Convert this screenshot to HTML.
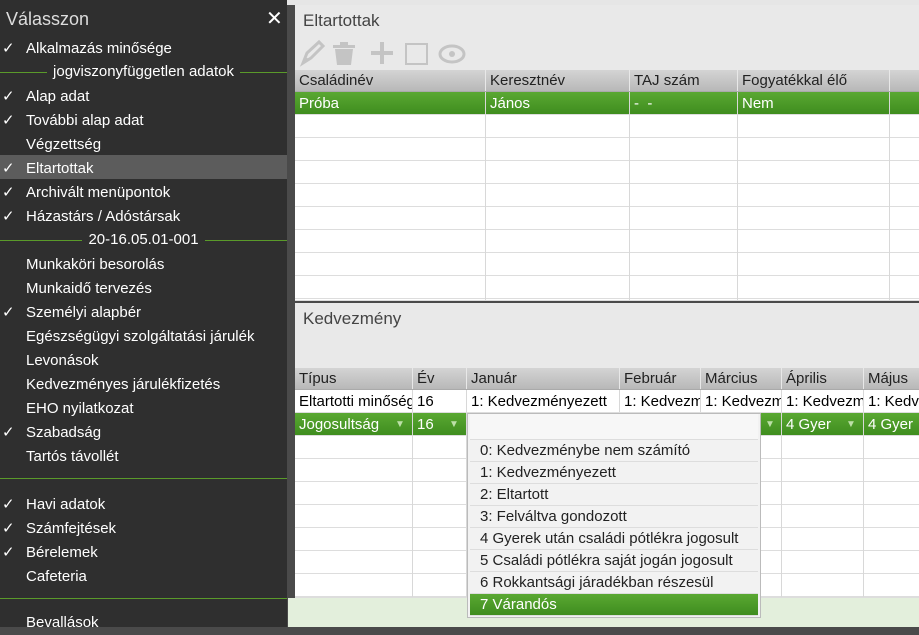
<!DOCTYPE html><html><head><meta charset="utf-8"><style>
*{margin:0;padding:0;box-sizing:border-box}
body{width:919px;height:627px;overflow:hidden;background:#4a4a4a;font-family:"Liberation Sans",sans-serif;position:relative}
.a{position:absolute;white-space:nowrap}
#sb{left:0;top:0;width:287px;height:627px;background:#2f2f2f;color:#fff;font-size:15px}
.it{position:absolute;left:0;width:287px;height:24px;line-height:24px}
.it .c{position:absolute;left:2px}
.it .t{position:absolute;left:26px}
.sep{position:absolute;left:0;width:287px;height:24px;line-height:24px;text-align:center}
.sep:before{content:"";position:absolute;left:0;right:0;top:12px;border-top:1px solid #5a9a2a}
.sep span{position:relative;background:#2f2f2f;padding:0 6px}
.hl{position:absolute;left:0;width:287px;border-top:1px solid #5a9a2a}
.pan{background:#e9e9e9}
.cell{position:absolute;height:100%;border-right:1px solid #d8d8d8;padding-left:4px;overflow:hidden;white-space:nowrap}
.row{position:absolute;left:0;right:0;height:23px;line-height:23px;font-size:15px;border-bottom:1px solid #ddd;background:#fff}
.row.th{background:linear-gradient(#d4d4d4,#b8b8b8);color:#222;border-bottom:1px solid #aaa}
.row.th .cell{border-right:1px solid #e8e8e8}
.row.g{background:linear-gradient(#5aa832,#3f8d1f);color:#fff}
.dd{position:absolute;left:467px;top:413px;width:294px;height:205px;background:#f2f2f2;border:1px solid #bbb;font-size:15px;color:#222}
.dd div{height:22px;line-height:22px;padding-left:10px;border-bottom:1px solid #ddd;margin:0 2px}
</style></head><body>
<div class="a" style="left:0;top:0;width:919px;height:5px;background:#e6e6e6"></div>
<div id="sb" class="a">
<div class="a" style="left:6px;top:9px;font-size:18px;color:#ddd">Válasszon</div>
<div class="a" style="left:266px;top:6px;font-size:20px">✕</div>
<div class="it" style="top:37px"><span class="c">✓</span><span class="t">Alkalmazás minősége</span></div>
<div class="sep" style="top:60px"><span>jogviszonyfüggetlen adatok</span></div>
<div class="it" style="top:85px"><span class="c">✓</span><span class="t">Alap adat</span></div>
<div class="it" style="top:109px"><span class="c">✓</span><span class="t">További alap adat</span></div>
<div class="it" style="top:133px"><span class="t">Végzettség</span></div>
<div class="it" style="top:155px;background:#5c5c5c"><span class="c" style="top:2px">✓</span><span class="t" style="top:2px">Eltartottak</span></div>
<div class="it" style="top:181px"><span class="c">✓</span><span class="t">Archivált menüpontok</span></div>
<div class="it" style="top:205px"><span class="c">✓</span><span class="t">Házastárs / Adóstársak</span></div>
<div class="sep" style="top:228px"><span>20-16.05.01-001</span></div>
<div class="it" style="top:253px"><span class="t">Munkaköri besorolás</span></div>
<div class="it" style="top:277px"><span class="t">Munkaidő tervezés</span></div>
<div class="it" style="top:301px"><span class="c">✓</span><span class="t">Személyi alapbér</span></div>
<div class="it" style="top:325px"><span class="t">Egészségügyi szolgáltatási járulék</span></div>
<div class="it" style="top:349px"><span class="t">Levonások</span></div>
<div class="it" style="top:373px"><span class="t">Kedvezményes járulékfizetés</span></div>
<div class="it" style="top:397px"><span class="t">EHO nyilatkozat</span></div>
<div class="it" style="top:421px"><span class="c">✓</span><span class="t">Szabadság</span></div>
<div class="it" style="top:445px"><span class="t">Tartós távollét</span></div>
<div class="hl" style="top:478px"></div>
<div class="it" style="top:493px"><span class="c">✓</span><span class="t">Havi adatok</span></div>
<div class="it" style="top:517px"><span class="c">✓</span><span class="t">Számfejtések</span></div>
<div class="it" style="top:541px"><span class="c">✓</span><span class="t">Bérelemek</span></div>
<div class="it" style="top:565px"><span class="t">Cafeteria</span></div>
<div class="hl" style="top:598px"></div>
<div class="it" style="top:611px"><span class="t">Bevallások</span></div>
</div>
<div class="a pan" style="left:295px;top:5px;width:624px;height:296px">
<div class="a" style="left:8px;top:6px;font-size:17px;color:#444">Eltartottak</div>
<svg class="a" style="left:4px;top:34px" width="170" height="28" fill="#c4c4c4">
<path d="M4 24 L8 14 L20 3 L24 7 L12 19 Z M6 22 L9 20" stroke="#c4c4c4" fill="none" stroke-width="3"/>
<rect x="34" y="6" width="22" height="3"/><rect x="41" y="3" width="8" height="3"/><path d="M36 10h18l-2 16h-14z"/>
<rect x="72" y="12" width="22" height="4"/><rect x="81" y="3" width="4" height="22"/>
<rect x="107" y="5" width="21" height="20" fill="none" stroke="#c4c4c4" stroke-width="2"/>
<ellipse cx="153" cy="15" rx="12" ry="8" fill="none" stroke="#c4c4c4" stroke-width="3"/><circle cx="153" cy="15" r="3"/>
</svg>
<div class="a" style="left:0;top:65px;width:624px;height:231px;background:#fff">
<div class="row th" style="top:0;height:22px;line-height:22px"><div class="cell" style="left:0;width:191px">Családinév</div><div class="cell" style="left:191px;width:144px">Keresztnév</div><div class="cell" style="left:335px;width:108px">TAJ szám</div><div class="cell" style="left:443px;width:152px">Fogyatékkal élő</div></div>
<div class="row g" style="top:22px"><div class="cell" style="left:0;width:191px">Próba</div><div class="cell" style="left:191px;width:144px">János</div><div class="cell" style="left:335px;width:108px">-&nbsp;&nbsp;-</div><div class="cell" style="left:443px;width:152px">Nem</div></div>
<div class="row" style="top:45px;height:186px;background:repeating-linear-gradient(#fff 0 22px,#ddd 22px 23px)"><div class="cell" style="left:0;width:191px"></div><div class="cell" style="left:191px;width:144px"></div><div class="cell" style="left:335px;width:108px"></div><div class="cell" style="left:443px;width:152px"></div></div>
</div></div>
<div class="a pan" style="left:295px;top:303px;width:624px;height:295px">
<div class="a" style="left:8px;top:6px;font-size:17px;color:#444">Kedvezmény</div>
<div class="a" style="left:0;top:65px;width:624px;height:230px;background:#fff">
<div class="row th" style="top:0;height:22px;line-height:22px"><div class="cell" style="left:0;width:118px">Típus</div><div class="cell" style="left:118px;width:54px">Év</div><div class="cell" style="left:172px;width:153px">Január</div><div class="cell" style="left:325px;width:81px">Február</div><div class="cell" style="left:406px;width:81px">Március</div><div class="cell" style="left:487px;width:82px">Április</div><div class="cell" style="left:569px;width:60px">Május</div></div>
<div class="row" style="top:22px"><div class="cell" style="left:0;width:118px">Eltartotti minőség</div><div class="cell" style="left:118px;width:54px">16</div><div class="cell" style="left:172px;width:153px">1: Kedvezményezett</div><div class="cell" style="left:325px;width:81px">1: Kedvezm</div><div class="cell" style="left:406px;width:81px">1: Kedvezm</div><div class="cell" style="left:487px;width:82px">1: Kedvezm</div><div class="cell" style="left:569px;width:60px">1: Kedvezm</div></div>
<div class="row g" style="top:45px"><div class="cell" style="left:0;width:118px">Jogosultság<span class="a" style="left:100px;font-size:10px;color:#bde0a8">▼</span></div><div class="cell" style="left:118px;width:54px">16<span class="a" style="left:36px;font-size:10px;color:#bde0a8">▼</span></div><div class="cell" style="left:172px;width:153px"></div><div class="cell" style="left:325px;width:81px"></div><div class="cell" style="left:406px;width:81px"><span class="a" style="left:64px;font-size:10px;color:#bde0a8">▼</span></div><div class="cell" style="left:487px;width:82px">4 Gyer<span class="a" style="left:64px;font-size:10px;color:#bde0a8">▼</span></div><div class="cell" style="left:569px;width:60px">4 Gyer</div></div>
<div class="row" style="top:68px;height:162px;background:repeating-linear-gradient(#fff 0 22px,#ddd 22px 23px)"><div class="cell" style="left:0;width:118px"></div><div class="cell" style="left:118px;width:54px"></div><div class="cell" style="left:172px;width:153px"></div><div class="cell" style="left:325px;width:81px"></div><div class="cell" style="left:406px;width:81px"></div><div class="cell" style="left:487px;width:82px"></div><div class="cell" style="left:569px;width:60px"></div></div>
</div></div>
<div class="a" style="left:288px;top:598px;width:631px;height:29px;background:#e3efdc"></div>
<div class="dd">
<div style="height:26px;background:#f7f7f7"></div>
<div>0: Kedvezménybe nem számító</div>
<div>1: Kedvezményezett</div>
<div>2: Eltartott</div>
<div>3: Felváltva gondozott</div>
<div>4 Gyerek után családi pótlékra jogosult</div>
<div>5 Családi pótlékra saját jogán jogosult</div>
<div>6 Rokkantsági járadékban részesül</div>
<div style="background:linear-gradient(#5aa832,#3f8d1f);color:#fff">7 Várandós</div>
</div>
</body></html>
